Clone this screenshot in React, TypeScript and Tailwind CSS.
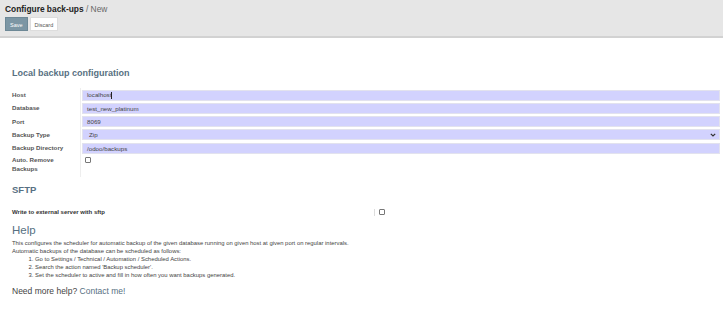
import * as React from "react"

const fields = [
    { label: "Host", value: "localhost", caret: true },
    { label: "Database", value: "test_new_platinum" },
    { label: "Port", value: "8069" },
    { label: "Backup Type", value: "Zip", select: true },
    { label: "Backup Directory", value: "/odoo/backups" },
]

function Checkbox() {
    return <span className="block w-[6px] h-[6px] border border-[#777] rounded-[1px] bg-white" />
}

export default function App() {
    return (
        <div className="w-[723px] h-[317px] bg-white overflow-hidden text-[#4c4c4c]" style={{ fontFamily: "'Liberation Sans', Arial, sans-serif" }}>
            <div className="h-[38px] bg-[#e6e6e6] border-b-2 border-[#d2d2d2] px-[5px] pt-[4px]">
                <div className="text-[8.4px] leading-[11px]">
                    <span className="font-bold text-[#222]">Configure back-ups</span>
                    <span className="text-[#666]"> / New</span>
                </div>
                <div className="flex gap-[2px] mt-[2px]">
                    <button className="h-[14px] px-[4px] bg-[#7c96a4] text-white text-[5.5px] leading-[14px] border border-[#6d8896]">Save</button>
                    <button className="h-[14px] px-[4px] bg-white text-[#555] text-[5.5px] leading-[14px] border border-[#ddd]">Discard</button>
                </div>
            </div>

            <div className="px-[12px]">
                <div className="mt-[29px] text-[9px] font-bold text-[#577082] leading-[12px]">Local backup configuration</div>

                <div className="mt-[9px] flex">
                    <div className="w-[68px] shrink-0 pt-[1px]">
                        {fields.map((f) => (
                            <div key={f.label} className="h-[13.3px] text-[6.2px] font-bold text-[#555] leading-[12px]">{f.label}</div>
                        ))}
                        <div className="text-[6.2px] font-bold text-[#555] leading-[8.5px] pt-[1px] pb-[4px]">Auto. Remove<br />Backups</div>
                    </div>
                    <div className="flex-1 border-l border-[#eee] pl-[1px] -mr-[9px]">
                        {fields.map((f) => (
                            <div key={f.label} className="h-[13.3px] pt-[1.5px]">
                                <div className="h-[11px] bg-[#d2d2fe] border border-[#e2e2ee] flex items-center justify-between pl-[4px] pr-[3px] text-[6.2px] text-[#444]">
                                    <span className={f.select ? "pl-[2px]" : ""}>
                                        {f.value}
                                        {f.caret && <span className="inline-block w-[0.5px] h-[7px] bg-[#222] align-middle" />}
                                    </span>
                                    {f.select && (
                                        <svg width="6" height="4" viewBox="0 0 6 4" fill="none">
                                            <path d="M0.8 0.8 L3 3 L5.2 0.8" stroke="#333" strokeWidth="1.2" />
                                        </svg>
                                    )}
                                </div>
                            </div>
                        ))}
                        <div className="pl-[3px] pt-[3px] h-[22px] flex items-start">
                            <Checkbox />
                        </div>
                    </div>
                </div>

                <div className="mt-[7px] text-[9.5px] font-bold text-[#577082] leading-[12px]">SFTP</div>

                <div className="mt-[12px] flex items-center">
                    <div className="w-[362px] shrink-0 text-[6px] font-bold text-[#333] leading-[8px]">Write to external server with sftp</div>
                    <div className="border-l border-[#ddd] h-[7px] mr-[4px]" />
                    <Checkbox />
                </div>

                <div className="mt-[8px] text-[11.5px] font-normal text-[#577082] leading-[13px]">Help</div>
                <div className="text-[5.9px] leading-[8px] text-[#444] mt-[2px]">
                    <div>This configures the scheduler for automatic backup of the given database running on given host at given port on regular intervals.</div>
                    <div>Automatic backups of the database can be scheduled as follows:</div>
                    <ol className="list-decimal pl-[23px]">
                        <li>Go to Settings / Technical / Automation / Scheduled Actions.</li>
                        <li>Search the action named 'Backup scheduler'.</li>
                        <li>Set the scheduler to active and fill in how often you want backups generated.</li>
                    </ol>
                </div>
                <div className="mt-[7px] text-[8.5px] leading-[11px] text-[#444]">
                    Need more help? <span className="text-[#577082]">Contact me!</span>
                </div>
            </div>
        </div>
    )
}
